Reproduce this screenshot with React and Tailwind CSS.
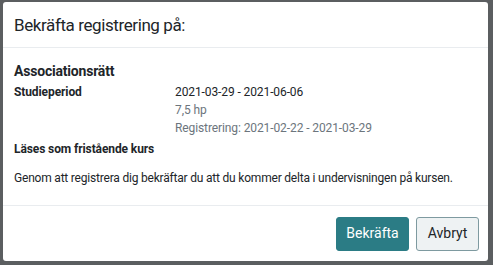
import React from 'react';

export default function App() {
  return (
    <div
      className="w-[493px] h-[265px] bg-[#5b5e60] pl-[3px] pr-[5px] pt-[2px] pb-[4px]"
      style={{ fontFamily: 'Roboto, "Noto Sans", sans-serif' }}
    >
      <div className="h-full bg-white rounded-[3px] flex flex-col text-[#212529]">
        {/* Header */}
        <div className="h-[46px] flex items-center px-[11px] pt-[2px] border-b border-[#e9ecef]">
          <h2 className="text-[17px] leading-none tracking-[-0.4px]">Bekräfta registrering på:</h2>
        </div>

        {/* Body */}
        <div className="flex-1 px-[11px] pt-[13px]">
          <h3 className="text-[14px] font-bold leading-[20px] tracking-[-0.2px]">Associationsrätt</h3>
          <div className="flex mt-[2px] text-[12px] leading-[18px] tracking-[-0.1px]">
            <div className="w-[161px] font-bold">Studieperiod</div>
            <div>
              <div>2021-03-29 - 2021-06-06</div>
              <div className="text-[#6c757d]">7,5 hp</div>
              <div className="text-[#6c757d]">Registrering: 2021-02-22 - 2021-03-29</div>
            </div>
          </div>
          <div className="mt-[3px] text-[12px] font-bold leading-[18px] tracking-[-0.1px]">Läses som fristående kurs</div>
          <p className="mt-[11px] text-[12px] leading-[18px] tracking-[-0.2px]">
            Genom att registrera dig bekräftar du att du kommer delta i undervisningen på kursen.
          </p>
        </div>

        {/* Footer */}
        <div className="h-[56px] border-t border-[#e9ecef] flex items-center justify-end gap-[7px] pl-[8px] pr-[9px]">
          <button className="w-[73px] h-[34px] rounded-[3px] bg-[#2b7c85] border border-[#2b7c85] text-white text-[14px]">
            Bekräfta
          </button>
          <button className="w-[63px] h-[34px] rounded-[3px] bg-[#eef2f3] border border-[#7e9aa0] text-[#212529] text-[14px]">
            Avbryt
          </button>
        </div>
      </div>
    </div>
  );
}
